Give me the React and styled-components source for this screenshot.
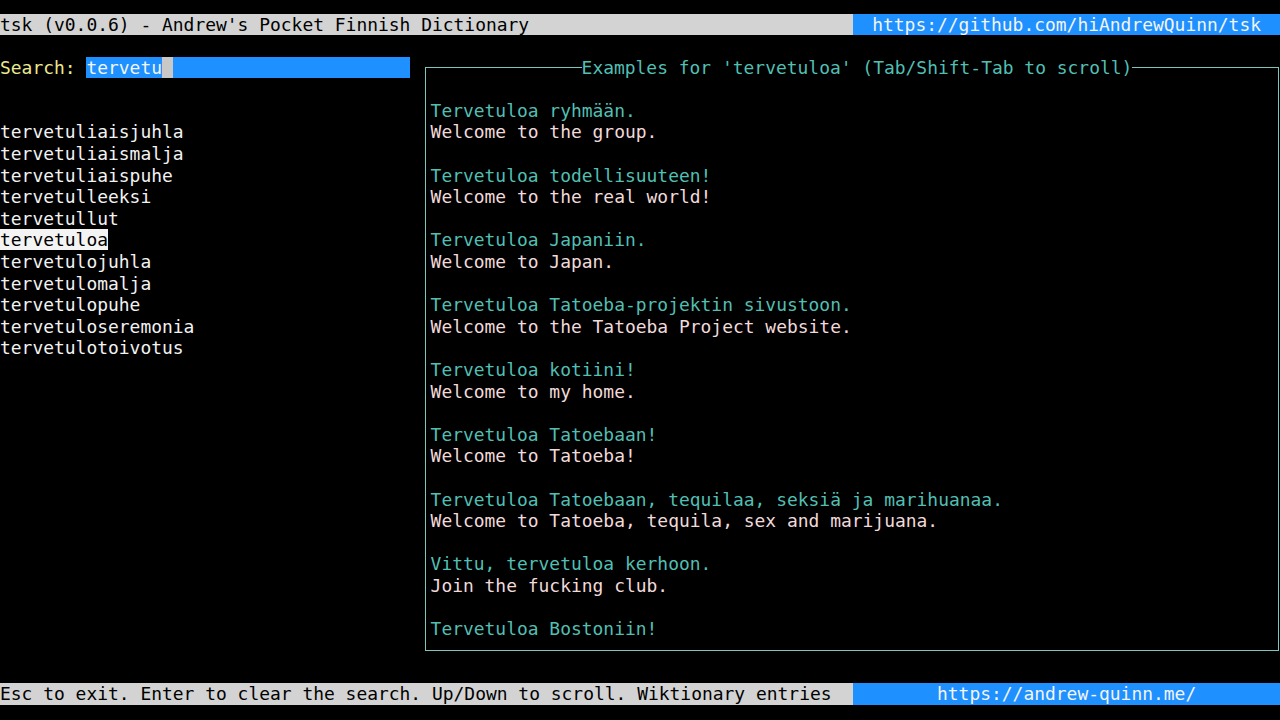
import React from "react";
import styled, { createGlobalStyle } from "styled-components";

const ROW = 21.6;
const COL = 10.8;

const GlobalStyle = createGlobalStyle`
  html, body {
    margin: 0;
    padding: 0;
    background: #000;
  }
`;

const Screen = styled.div`
  width: 1280px;
  height: 720px;
  box-sizing: border-box;
  padding-top: 13.5px;
  background: #000;
  overflow: hidden;
  font-family: "DejaVu Sans Mono", "Liberation Mono", monospace;
  font-size: 17.94px;
  line-height: ${ROW}px;
  white-space: pre;
  color: #f2f2f2;
`;

const Bar = styled.div`
  display: flex;
  height: ${ROW}px;
`;

const BarText = styled.div`
  width: ${COL * 79}px;
  background: #d3d3d3;
  color: #000;
`;

const BarLink = styled.div`
  flex: 1;
  background: #1e90ff;
  color: #f4f4f4;
  text-align: center;
`;

const Body = styled.div`
  display: flex;
  height: ${ROW * 30}px;
`;

const Left = styled.div`
  width: ${COL * 39}px;
  padding-top: ${ROW}px;
`;

const SearchRow = styled.div`
  display: flex;
  height: ${ROW}px;
  margin-bottom: ${ROW * 2}px;
`;

const Label = styled.span`
  color: #ebe98f;
`;

const Input = styled.div`
  width: ${COL * 30}px;
  background: #1e90ff;
  color: #f4f4f4;
  display: flex;
`;

const Cursor = styled.span`
  display: inline-block;
  width: ${COL}px;
  background: #c8c8c8;
`;

const List = styled.ul`
  list-style: none;
  margin: 0;
  padding: 0;
`;

const Item = styled.li`
  height: ${ROW}px;
  span {
    background: ${(p) => (p.$selected ? "#f4f4f4" : "transparent")};
    color: ${(p) => (p.$selected ? "#000" : "#f2f2f2")};
  }
`;

const Right = styled.div`
  flex: 1;
  padding-top: ${ROW}px;
  padding-left: 4px;
  padding-right: 1.5px;
`;

const Box = styled.fieldset`
  margin: 0;
  height: ${ROW * 27.5}px;
  box-sizing: border-box;
  border: 1px solid #7ec6bd;
  padding: 0 0 0 4.4px;
  overflow: hidden;
  min-width: 0;
`;

const Legend = styled.legend`
  padding: 0;
  margin-left: 151px;
  height: ${ROW}px;
  color: #52bfb3;
`;

const Pair = styled.div`
  margin-top: ${ROW}px;
`;

const Finnish = styled.div`
  height: ${ROW}px;
  color: #52bfb3;
`;

const English = styled.div`
  height: ${ROW}px;
  color: #f1dada;
`;

const words = [
  "tervetuliaisjuhla",
  "tervetuliaismalja",
  "tervetuliaispuhe",
  "tervetulleeksi",
  "tervetullut",
  "tervetuloa",
  "tervetulojuhla",
  "tervetulomalja",
  "tervetulopuhe",
  "tervetuloseremonia",
  "tervetulotoivotus",
];

// the last translation is scrolled past the bottom border
const examples = [
  ["Tervetuloa ryhmään.", "Welcome to the group."],
  ["Tervetuloa todellisuuteen!", "Welcome to the real world!"],
  ["Tervetuloa Japaniin.", "Welcome to Japan."],
  ["Tervetuloa Tatoeba-projektin sivustoon.", "Welcome to the Tatoeba Project website."],
  ["Tervetuloa kotiini!", "Welcome to my home."],
  ["Tervetuloa Tatoebaan!", "Welcome to Tatoeba!"],
  ["Tervetuloa Tatoebaan, tequilaa, seksiä ja marihuanaa.", "Welcome to Tatoeba, tequila, sex and marijuana."],
  ["Vittu, tervetuloa kerhoon.", "Join the fucking club."],
  ["Tervetuloa Bostoniin!", null],
];

export default function App() {
  return (
    <>
      <GlobalStyle />
      <Screen>
        <Bar>
          <BarText>tsk (v0.0.6) - Andrew's Pocket Finnish Dictionary</BarText>
          <BarLink>https://github.com/hiAndrewQuinn/tsk</BarLink>
        </Bar>
        <Body>
          <Left>
            <SearchRow>
              <Label>Search: </Label>
              <Input>
                tervetu
                <Cursor> </Cursor>
              </Input>
            </SearchRow>
            <List>
              {words.map((w) => (
                <Item key={w} $selected={w === "tervetuloa"}>
                  <span>{w}</span>
                </Item>
              ))}
            </List>
          </Left>
          <Right>
            <Box>
              <Legend>Examples for 'tervetuloa' (Tab/Shift-Tab to scroll)</Legend>
              {examples.map(([fi, en]) => (
                <Pair key={fi}>
                  <Finnish>{fi}</Finnish>
                  {en && <English>{en}</English>}
                </Pair>
              ))}
            </Box>
          </Right>
        </Body>
        <Bar>
          <BarText>Esc to exit. Enter to clear the search. Up/Down to scroll. Wiktionary entries</BarText>
          <BarLink>https://andrew-quinn.me/</BarLink>
        </Bar>
      </Screen>
    </>
  );
}
